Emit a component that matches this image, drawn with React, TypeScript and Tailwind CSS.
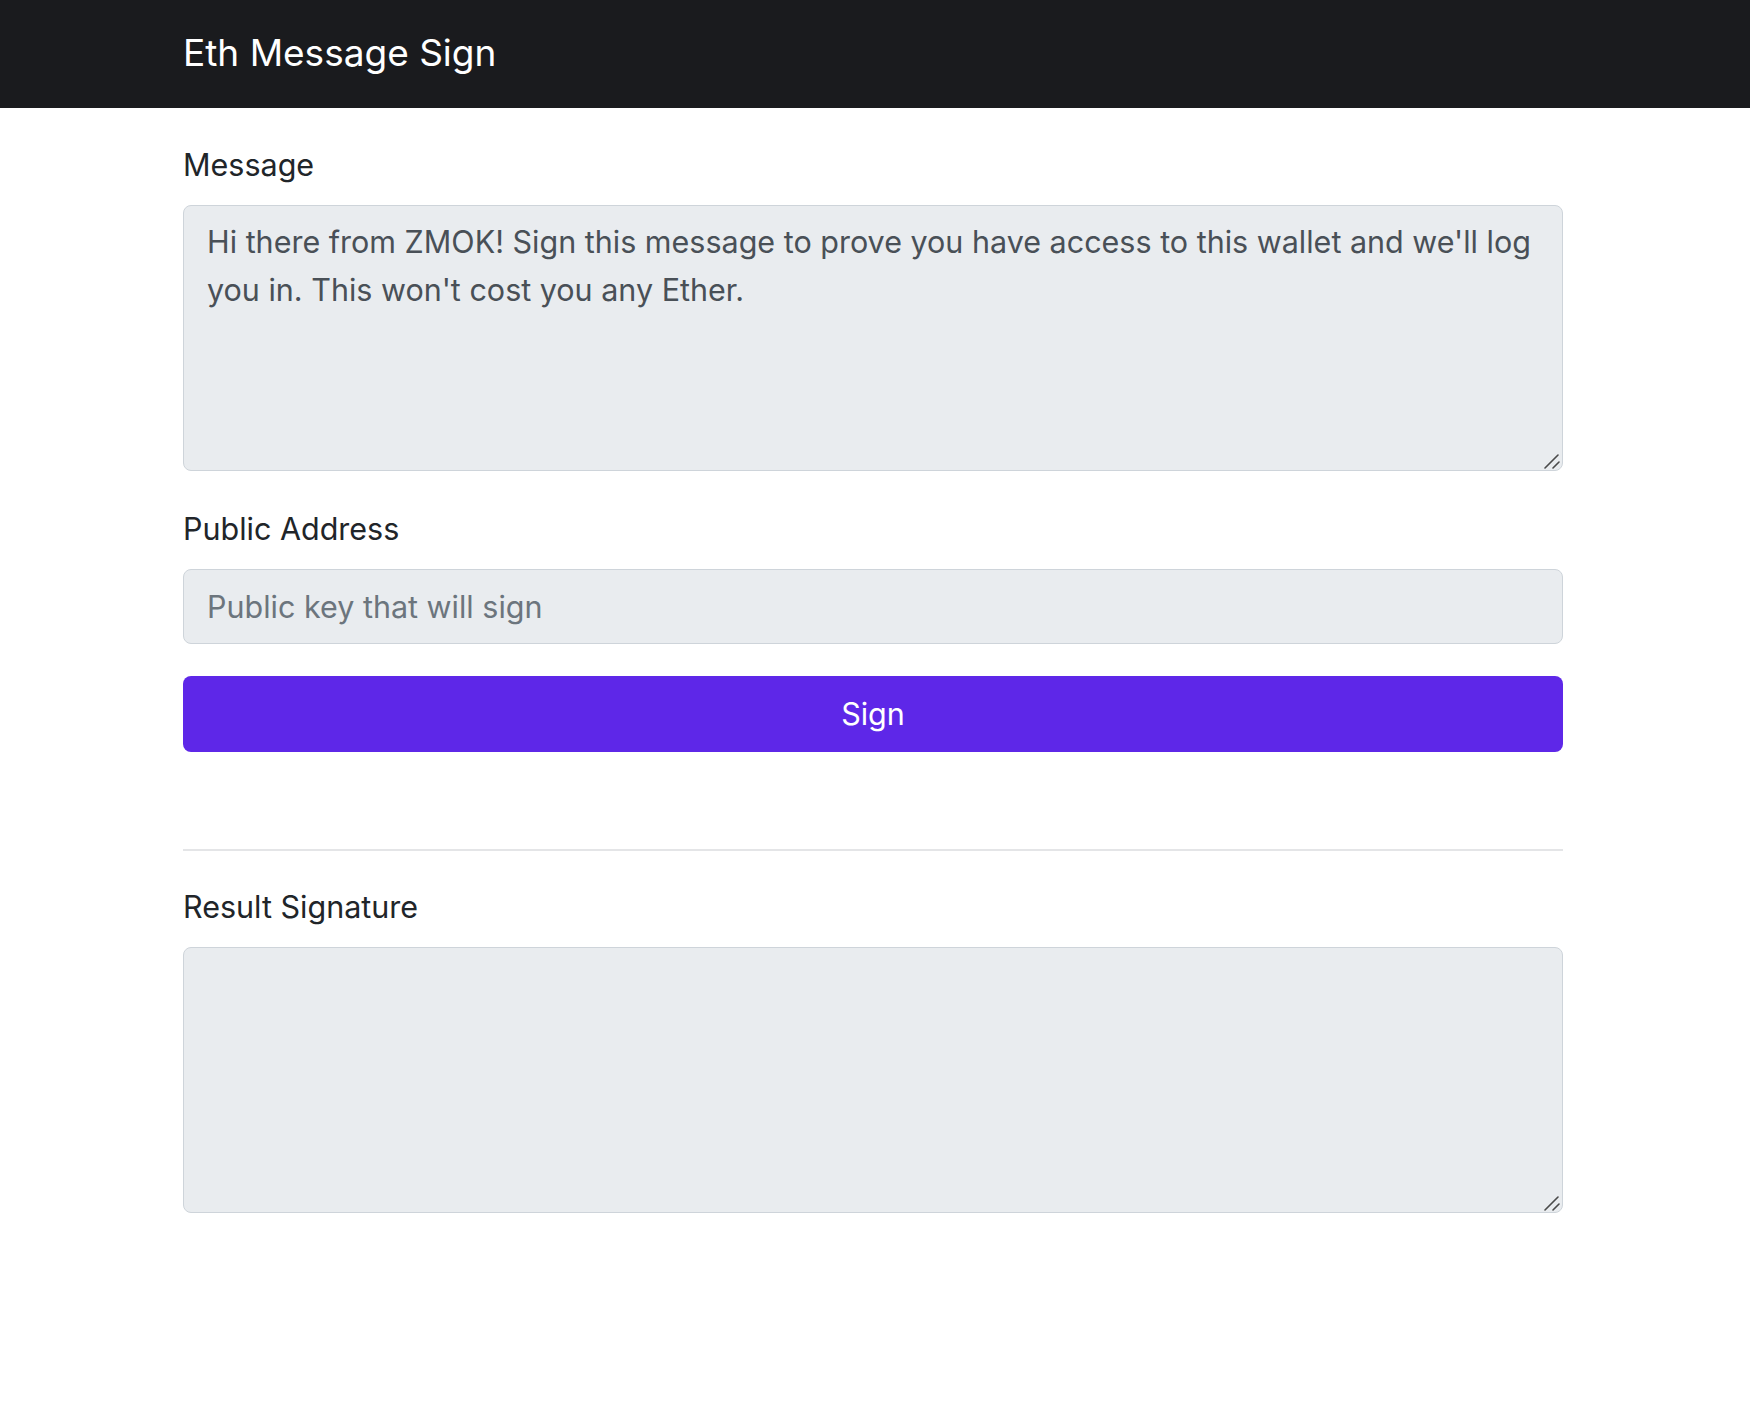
import { useState } from 'react';

const MESSAGE =
  "Hi there from ZMOK! Sign this message to prove you have access to this wallet and we'll log you in. This won't cost you any Ether.";

function Field({ label, children }: { label: string; children: React.ReactNode }) {
  return (
    <div className="flex flex-col">
      <label className="mb-[17px] text-[30.5px] leading-[46px] text-[#212529]">{label}</label>
      {children}
    </div>
  );
}

// the grip drawn in the corner of a textarea
function Grip() {
  return (
    <svg
      viewBox="0 0 16 16"
      className="pointer-events-none absolute bottom-[2px] right-[3px] h-[16px] w-[16px]"
      fill="none"
      stroke="#4a4a4a"
      strokeWidth="1.6"
      strokeLinecap="round"
    >
      <path d="M1 15 L14 2" />
      <path d="M9 15 L15 9" />
    </svg>
  );
}

function Area({ value, onChange }: { value: string; onChange?: (v: string) => void }) {
  return (
    <div className="relative">
      <textarea
        readOnly={!onChange}
        value={value}
        onChange={(e) => onChange?.(e.target.value)}
        className="block h-[266px] w-full resize-none rounded-[8px] border border-[#ced4da] bg-[#e9ecef] px-[23px] pt-[12px] text-[30.5px] leading-[48px] text-[#495057] outline-none"
      />
      <Grip />
    </div>
  );
}

export default function App() {
  const [message] = useState(MESSAGE);
  const [address, setAddress] = useState('');
  const [signature] = useState('');

  return (
    <div className="min-h-[1404px] bg-white font-['Inter','Noto_Sans',sans-serif]">
      <header className="flex h-[108px] items-center bg-[#1a1b1e] pl-[183px]">
        <span className="pb-[2px] text-[37px] leading-[56px] text-white">Eth Message Sign</span>
      </header>

      <main className="ml-[183px] flex w-[1380px] flex-col pt-[34px]">
        <Field label="Message">
          <Area value={message} />
        </Field>

        <div className="mt-[35px]">
          <Field label="Public Address">
            <input
              value={address}
              onChange={(e) => setAddress(e.target.value)}
              placeholder="Public key that will sign"
              className="h-[75px] w-full rounded-[8px] border border-[#ced4da] bg-[#e9ecef] px-[23px] text-[30.5px] text-[#495057] outline-none placeholder:text-[#6c757d]"
            />
          </Field>
        </div>

        <button className="mt-[32px] h-[76px] w-full rounded-[8px] bg-[#5e27e8] text-[30.5px] text-white">
          Sign
        </button>

        <hr className="mt-[97px] border-t-2 border-[#e4e5e7]" />

        <div className="mt-[33px]">
          <Field label="Result Signature">
            <Area value={signature} />
          </Field>
        </div>
      </main>
    </div>
  );
}
